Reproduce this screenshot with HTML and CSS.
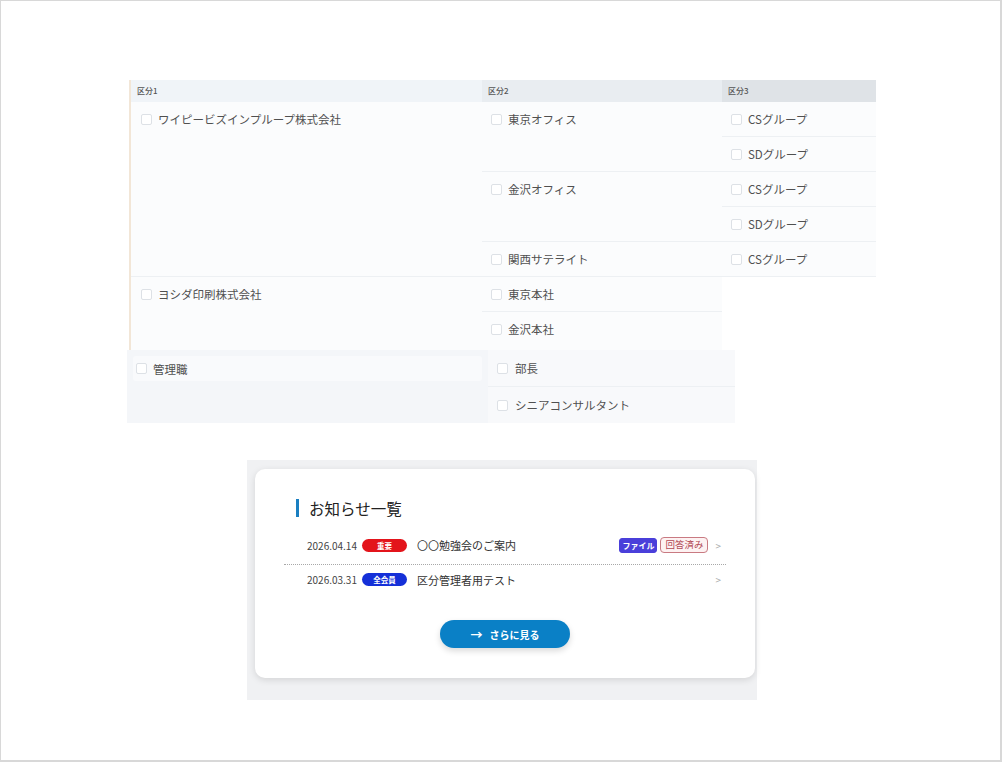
FILE: index.html
```html
<!DOCTYPE html>
<html lang="ja">
<head>
<meta charset="utf-8">
<title>区分 / お知らせ一覧</title>
<link rel="stylesheet" href="styles.css">
</head>
<body>
<div class="frame">
  <div class="org">
    <div class="grid1">
      <div class="hd h1">区分1</div>
      <div class="hd h2">区分2</div>
      <div class="hd h3">区分3</div>

      <div class="c c1 r-a"><span class="cb"></span><span>ワイピービズインプループ株式会社</span></div>
      <div class="c c2 r-t1"><span class="cb"></span><span>東京オフィス</span></div>
      <div class="c c2 r-t2"><span class="cb"></span><span>金沢オフィス</span></div>
      <div class="c c2 r-t3 sep"><span class="cb"></span><span>関西サテライト</span></div>
      <div class="c c3 r2 sep"><span class="cb"></span><span>CSグループ</span></div>
      <div class="c c3 r3 sep"><span class="cb"></span><span>SDグループ</span></div>
      <div class="c c3 r4 sep"><span class="cb"></span><span>CSグループ</span></div>
      <div class="c c3 r5 sep"><span class="cb"></span><span>SDグループ</span></div>
      <div class="c c3 r6 sep"><span class="cb"></span><span>CSグループ</span></div>

      <div class="c c1 r-b"><span class="cb"></span><span>ヨシダ印刷株式会社</span></div>
      <div class="c c2 r7 sep"><span class="cb"></span><span>東京本社</span></div>
      <div class="c c2 r8"><span class="cb"></span><span>金沢本社</span></div>
    </div>

    <div class="grid2">
      <div class="left">
        <div class="pos"><span class="cb"></span><span>管理職</span></div>
      </div>
      <div class="right">
        <div class="rc sep"><span class="cb"></span><span>部長</span></div>
        <div class="rc"><span class="cb"></span><span>シニアコンサルタント</span></div>
      </div>
    </div>
  </div>

  <div class="news-wrap">
    <div class="card">
      <h2 class="title">お知らせ一覧</h2>
      <ul class="list">
        <li class="row dotted">
          <span class="date">2026.04.14</span>
          <span class="badge red">重要</span>
          <span class="subject">〇〇勉強会のご案内</span>
          <span class="tag file">ファイル</span>
          <span class="tag done">回答済み</span>
          <span class="chev">&gt;</span>
        </li>
        <li class="row">
          <span class="date">2026.03.31</span>
          <span class="badge blue">全会員</span>
          <span class="subject">区分管理者用テスト</span>
          <span class="chev">&gt;</span>
        </li>
      </ul>
      <div class="btn-row">
        <a class="more" href="#"><span class="arr">→</span>さらに見る</a>
      </div>
    </div>
  </div>
</div>
</body>
</html>
```

FILE: styles.css
```css
* { box-sizing: border-box; }
html, body { margin: 0; padding: 0; background: #ffffff; }
body {
  font-family: "Noto Sans CJK JP", "Noto Sans", sans-serif;
  color: #444;
}
.frame {
  width: 1002px;
  height: 762px;
  border-style: solid;
  border-color: #d8d8d8;
  border-width: 1px 2px 2px 1px;
  padding-top: 79px;
  overflow: hidden;
}

/* ---------- org table ---------- */
.org { margin-left: 126px; }
.grid1 {
  margin-left: 2px;
  width: 747px;
  border-left: 2px solid #f2e6d7;
  display: grid;
  grid-template-columns: 351px 240px 154px;
  grid-template-rows: 22px 35px 35px 35px 35px 35px 35px 38px;
  font-size: 11.5px;
  color: #505050;
}
.hd {
  font-size: 8px;
  color: #555;
  line-height: 22px;
  padding-left: 6px;
  font-weight: 500;
}
.h1 { background: #f0f4f8; grid-column: 1; grid-row: 1; }
.h2 { background: #e9edf1; grid-column: 2; grid-row: 1; }
.h3 { background: #dfe3e7; grid-column: 3; grid-row: 1; }

.c {
  display: flex;
  align-items: flex-start;
  gap: 6px;
  padding: 10px 0 0 9px;
  line-height: 15px;
  background: #fbfcfd;
}
.c1 { grid-column: 1; padding-left: 10px; }
.c2 { grid-column: 2; }
.c3 { grid-column: 3; }
.sep { border-bottom: 1px solid #edf0f3; }
.r-a { grid-row: 2 / 7; border-bottom: 1px solid #edf0f3; }
.r-b { grid-row: 7 / 9; }
.r-t1 { grid-row: 2 / 4; border-bottom: 1px solid #edf0f3; }
.r-t2 { grid-row: 4 / 6; border-bottom: 1px solid #edf0f3; }
.r-t3 { grid-row: 6; }
.r2 { grid-row: 2; }
.r3 { grid-row: 3; }
.r4 { grid-row: 4; }
.r5 { grid-row: 5; }
.r6 { grid-row: 6; }
.r7 { grid-row: 7; }
.r8 { grid-row: 8; }

.cb {
  display: inline-block;
  flex: none;
  width: 11px;
  height: 11px;
  margin-top: 2px;
  border: 1px solid #dde1e6;
  border-radius: 2px;
  background: #fff;
}

.grid2 {
  width: 608px;
  height: 73px;
  display: grid;
  grid-template-columns: 361px 247px;
  background: #f4f6f9;
  font-size: 11.5px;
  color: #505050;
}
.left { padding: 6px 0 0 6px; }
.pos {
  width: 349px;
  height: 25px;
  background: #f9fafc;
  border-radius: 3px;
  display: flex;
  align-items: center;
  gap: 6px;
  padding-left: 3px;
}
.pos .cb { margin-top: 0; }
.right { display: flex; flex-direction: column; }
.rc {
  flex: 1;
  display: flex;
  align-items: center;
  gap: 7px;
  padding-left: 9px;
  background: #f8f9fb;
}
.rc .cb { margin-top: 0; }

/* ---------- news card ---------- */
.news-wrap {
  margin: 37px 0 0 246px;
  width: 510px;
  height: 240px;
  background: #f0f1f3;
  padding: 9px 2px 0 8px;
}
.card {
  background: #fff;
  border-radius: 10px;
  box-shadow: 0 2px 7px rgba(0, 0, 0, 0.12);
  height: 209px;
  padding: 30px 29px 0 29px;
}
.title {
  margin: 0 0 0 12px;
  font-size: 15.5px;
  font-weight: 400;
  line-height: 18px;
  color: #222;
  border-left: 3px solid #1a7fc1;
  padding-left: 10px;
}
.list { list-style: none; margin: 13px 0 0; padding: 0; }
.row {
  display: flex;
  align-items: center;
  height: 35px;
  padding: 0 5px 4px 23px;
  font-size: 11px;
  color: #333;
}
.row.dotted { border-bottom: 1px dotted #a8a8a8; }
.row + .row { height: 29px; padding-bottom: 0; }
.date { font-size: 10px; color: #444; width: 55px; flex: none; }
.badge {
  flex: none;
  width: 45px;
  height: 13px;
  border-radius: 7px;
  color: #fff;
  font-size: 7.5px;
  font-weight: 700;
  line-height: 13px;
  text-align: center;
  margin-right: 10px;
}
.red { background: #e3141b; }
.blue { background: #1530d8; }
.subject { flex: 1; font-size: 11px; color: #333; }
.tag {
  flex: none;
  height: 15px;
  border-radius: 3px;
  line-height: 13px;
}
.file {
  background: #4a3fda;
  color: #fff;
  font-weight: 700;
  font-size: 8px;
  border: 1px solid #4a3fda;
  padding: 0 2px;
  margin-right: 3px;
}
.done {
  height: 16px;
  background: #fdf2f2;
  color: #b24a55;
  font-size: 9.5px;
  border: 1px solid #c97a82;
  border-radius: 4px;
  padding: 0 4px;
}
.chev { flex: none; color: #aaa; font-size: 10px; margin-left: 7px; }
.btn-row { display: flex; justify-content: center; margin-top: 26px; }
.more {
  width: 130px;
  height: 28px;
  border-radius: 14px;
  background: #0a80c6;
  color: #fff;
  text-decoration: none;
  font-size: 10px;
  font-weight: 700;
  display: flex;
  align-items: center;
  justify-content: center;
  gap: 7px;
  box-shadow: 0 3px 6px rgba(0, 0, 0, 0.15);
}
.arr { font-size: 12px; font-weight: 700; }
```
